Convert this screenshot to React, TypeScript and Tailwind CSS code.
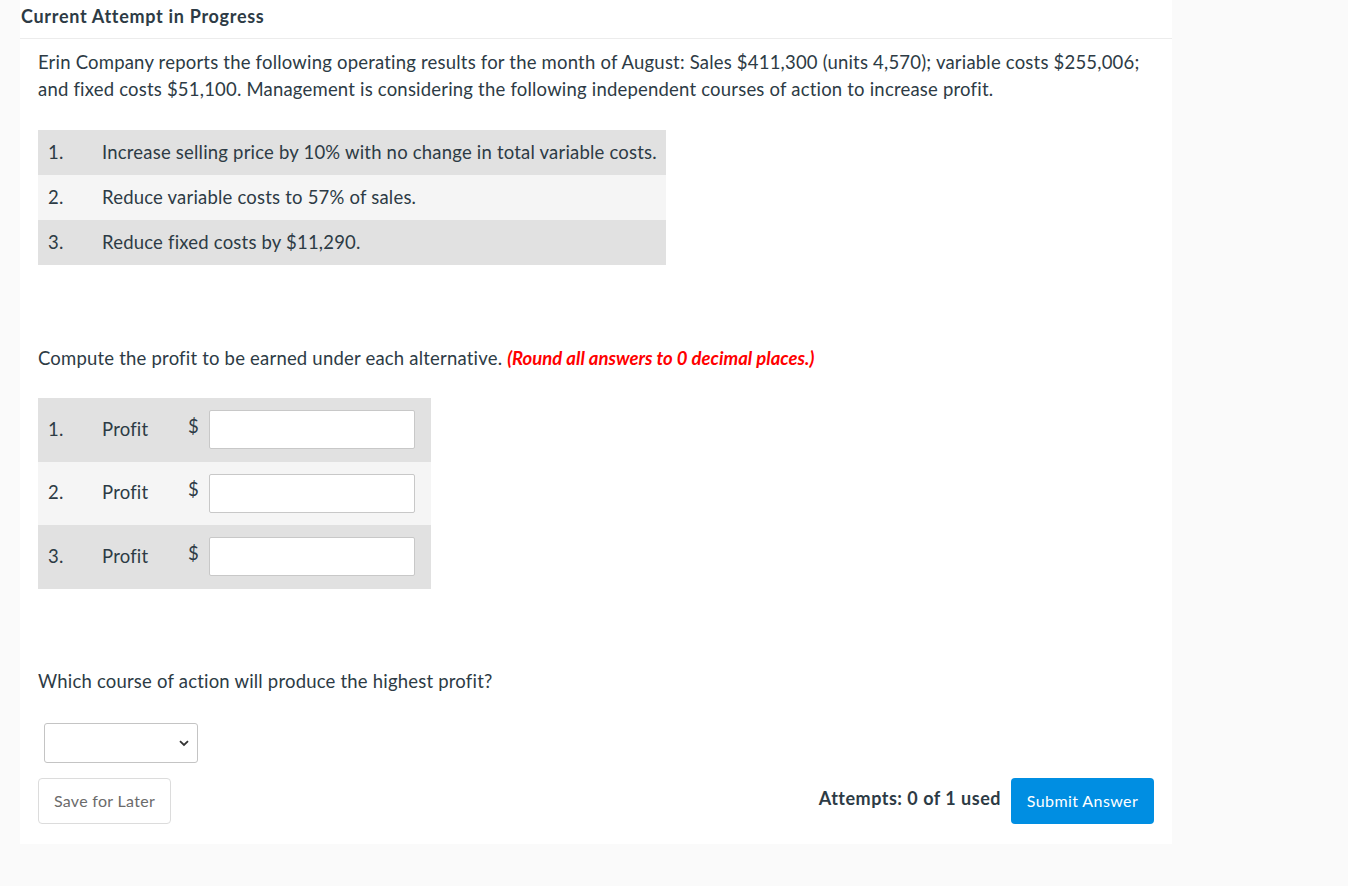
export default function App() {
  const options = [
    "Increase selling price by 10% with no change in total variable costs.",
    "Reduce variable costs to 57% of sales.",
    "Reduce fixed costs by $11,290.",
  ];
  const rowBg = (i: number) => (i % 2 === 0 ? "bg-[#e1e1e1]" : "bg-[#f5f5f5]");

  return (
    <div className="min-h-[886px] bg-[#fafafa] font-['Lato','Noto_Sans',sans-serif] text-[#2d3b45]">
      <div className="ml-[20px] w-[1152px] bg-white pb-[20px]">
        <div className="flex h-[39px] items-start border-b border-[#ececec] pt-[3px] pl-[1px] text-[18px] font-bold tracking-[0.7px]">
          Current Attempt in Progress
        </div>
        <div className="px-[18px] tracking-[0.2px]">
          <p className="mt-[10px] text-[18.5px] leading-[27px]">
            Erin Company reports the following operating results for the month of August: Sales $411,300 (units 4,570); variable costs $255,006; and fixed costs $51,100. Management is considering the following independent courses of action to increase profit.
          </p>

          <table className="mt-[27px] w-[628px] border-collapse text-[18.5px]">
            <tbody>
              {options.map((t, i) => (
                <tr key={i} className={`h-[45px] ${rowBg(i)}`}>
                  <td className="w-[64px] pl-[10px]">{i + 1}.</td>
                  <td>{t}</td>
                </tr>
              ))}
            </tbody>
          </table>

          <p className="mt-[80px] text-[18.5px] leading-[27px]">
            Compute the profit to be earned under each alternative.{" "}
            <span className="font-bold italic tracking-[0px] text-[#ff0000]">(Round all answers to 0 decimal places.)</span>
          </p>

          <table className="mt-[26px] w-[393px] border-collapse text-[18.5px]">
            <tbody>
              {[1, 2, 3].map((n, i) => (
                <tr key={n} className={`h-[63.5px] ${rowBg(i)}`}>
                  <td className="w-[64px] pl-[10px]">{n}.</td>
                  <td className="w-[86px]">Profit</td>
                  <td className="w-[21px] align-middle">
                    <span className="relative -top-[3px]">$</span>
                  </td>
                  <td className="pr-[16px]">
                    <input
                      type="text"
                      className="block h-[39px] w-[206px] rounded-[2px] border border-[#c8c8c8] bg-white"
                    />
                  </td>
                </tr>
              ))}
            </tbody>
          </table>

          <p className="mt-[79px] text-[18.5px] leading-[27px]">Which course of action will produce the highest profit?</p>

          <div className="relative mt-[28px] ml-[6px] h-[40px] w-[154px] rounded-[3px] border border-[#c4c4c4] bg-white">
            <svg className="absolute right-[8px] top-[16px]" width="10" height="7" viewBox="0 0 10 7">
              <path d="M1 1.2 L5 5 L9 1.2" fill="none" stroke="#333" strokeWidth="1.8" />
            </svg>
          </div>

          <div className="mt-[15px] flex items-center">
            <button
              type="button"
              className="h-[46px] w-[133px] rounded-[4px] border border-[#dcdcdc] bg-white text-[16px] tracking-[0.3px] text-[#6b6b6b]"
            >
              Save for Later
            </button>
            <div className="ml-auto flex items-center">
              <span className="mr-[10px] -translate-y-[2px] text-[18px] font-bold tracking-[0.5px]">Attempts: 0 of 1 used</span>
              <button
                type="button"
                className="h-[46px] w-[143px] rounded-[4px] bg-[#008ee2] text-[16px] tracking-[0.4px] text-white"
              >
                Submit Answer
              </button>
            </div>
          </div>
        </div>
      </div>
    </div>
  );
}
